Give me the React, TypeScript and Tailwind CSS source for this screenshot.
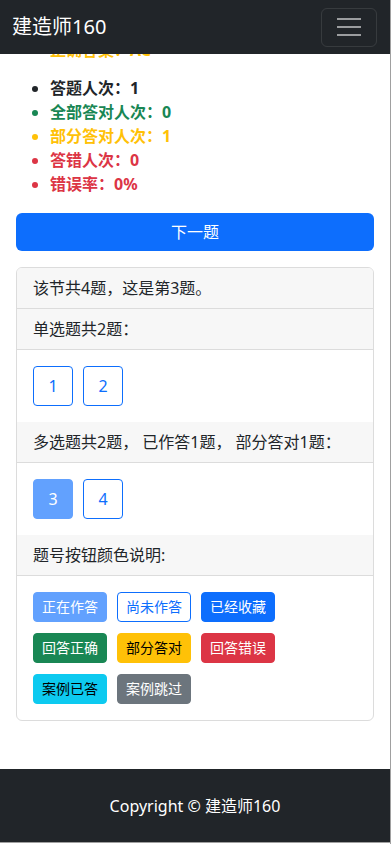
import React from "react";

const STATS = [
  { label: "答题人次：", value: "1", color: "text-[#212529]" },
  { label: "全部答对人次：", value: "0", color: "text-[#198754]" },
  { label: "部分答对人次：", value: "1", color: "text-[#ffc107]" },
  { label: "答错人次：", value: "0", color: "text-[#dc3545]" },
  { label: "错误率：", value: "0%", color: "text-[#dc3545]" },
];

const LEGEND = [
  { label: "正在作答", cls: "bg-[#62a1fe] border-[#62a1fe] text-white" },
  { label: "尚未作答", cls: "bg-white border-[#0d6efd] text-[#0d6efd]" },
  { label: "已经收藏", cls: "bg-[#0d6efd] border-[#0d6efd] text-white" },
  { label: "回答正确", cls: "bg-[#198754] border-[#198754] text-white" },
  { label: "部分答对", cls: "bg-[#ffc107] border-[#ffc107] text-black" },
  { label: "回答错误", cls: "bg-[#dc3545] border-[#dc3545] text-white" },
  { label: "案例已答", cls: "bg-[#0dcaf0] border-[#0dcaf0] text-black" },
  { label: "案例跳过", cls: "bg-[#6c757d] border-[#6c757d] text-white" },
];

// faint user watermark tiled over the page
const MARKS = [0, 1, 2, 3, 4].flatMap((r) => [
  { top: 75 + r * 150, left: 40, key: `${r}a` },
  { top: 75 + r * 150, left: 225, key: `${r}b` },
]);

const CardHeader: React.FC<{ children: React.ReactNode }> = ({ children }) => (
  <div className="border-b border-[#dcdcdc] bg-[#f7f7f7] px-4 py-2 leading-6">{children}</div>
);

const NumBtn: React.FC<{ n: number; active?: boolean }> = ({ n, active }) => (
  <span
    className={`flex h-10 w-10 items-center justify-center rounded-[4px] border text-base ${
      active ? "border-[#62a1fe] bg-[#62a1fe] text-white" : "border-[#0d6efd] bg-white text-[#0d6efd]"
    }`}
  >
    {n}
  </span>
);

export default function App() {
  return (
    <div
      className="flex h-[844px] w-[392px] overflow-hidden bg-white text-[#212529]"
      style={{ fontFamily: '"Noto Sans", "Noto Sans CJK SC", sans-serif' }}
    >
      <div className="relative flex h-[843px] w-[390px] flex-col overflow-hidden border-b border-[#a0a0a0]">
        {/* navbar overlays scrolled content */}
        <nav className="absolute left-0 right-0 top-0 z-20 flex h-[54px] items-center justify-between bg-[#212529] pl-3 pr-[13px]">
          <span className="text-[20px] leading-none text-white">建造师160</span>
          <span className="flex h-[39px] w-[56px] flex-col items-center justify-center gap-[6px] rounded-[6px] border border-white/10">
            <span className="h-[2px] w-6 bg-white/55" />
            <span className="h-[2px] w-6 bg-white/55" />
            <span className="h-[2px] w-6 bg-white/55" />
          </span>
        </nav>

        <main className="flex-1 px-4 pt-[38px]">
          <p className="pl-[34px] text-base font-bold leading-6 text-[#ffc107]">正确答案：AC</p>
          <ul className="mt-[14px] list-disc pl-[34px] text-base font-bold leading-6">
            {STATS.map((s) => (
              <li key={s.label} className={s.color}>
                {s.label}
                {s.value}
              </li>
            ))}
          </ul>

          <button className="mt-[17px] flex h-[38px] w-full items-center justify-center rounded-[6px] bg-[#0d6efd] text-base text-white">
            下一题
          </button>

          <div className="mt-4 overflow-hidden rounded-[6px] border border-[#dcdcdc] text-base">
            <CardHeader>该节共4题，这是第3题。</CardHeader>
            <CardHeader>单选题共2题：</CardHeader>
            <div className="flex gap-[10px] p-4">
              <NumBtn n={1} />
              <NumBtn n={2} />
            </div>
            <CardHeader>多选题共2题， 已作答1题， 部分答对1题：</CardHeader>
            <div className="flex gap-[10px] p-4">
              <NumBtn n={3} active />
              <NumBtn n={4} />
            </div>
            <CardHeader>题号按钮颜色说明:</CardHeader>
            <div className="flex flex-wrap gap-x-[10px] gap-y-[11px] p-4">
              {LEGEND.map((l) => (
                <span
                  key={l.label}
                  className={`flex h-[30px] w-[74px] items-center justify-center rounded-[4px] border text-sm ${l.cls}`}
                >
                  {l.label}
                </span>
              ))}
            </div>
          </div>
        </main>

        <footer className="flex h-[73px] items-center justify-center bg-[#212529] text-base text-white">
          Copyright © 建造师160
        </footer>

        <div className="pointer-events-none absolute inset-0 z-10">
          {MARKS.map((m) => (
            <div
              key={m.key}
              className="absolute flex -rotate-[30deg] flex-col items-center text-[18px] leading-6 text-black/[0.025]"
              style={{ top: m.top, left: m.left }}
            >
              <span>吴凡</span>
              <span>223.107.211.39</span>
            </div>
          ))}
        </div>
      </div>
      <div className="h-full w-[2px] border-l border-[#a0a0a0] bg-white" />
    </div>
  );
}
